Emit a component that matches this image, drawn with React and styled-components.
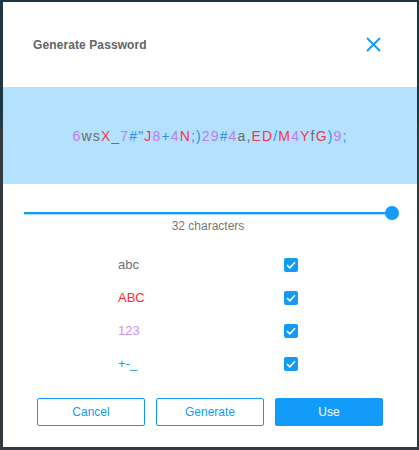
import React, { useState } from "react";
import styled, { createGlobalStyle } from "styled-components";

const GlobalStyle = createGlobalStyle`
  html, body {
    margin: 0;
    padding: 0;
    background: #1f3544;
  }
  body {
    font-family: "Liberation Sans", Arial, sans-serif;
  }
`;

const BLUE = "#139bfa";

const Backdrop = styled.div`
  width: 419px;
  height: 450px;
  padding: 2px 2px 3px 3px;
  box-sizing: border-box;
  background: linear-gradient(180deg, #1d3746 0%, #1d3746 25%, #34393d 30%, #34393d 100%);
`;

const Dialog = styled.div`
  width: 414px;
  height: 445px;
  background: #fff;
  display: flex;
  flex-direction: column;
`;

const Header = styled.div`
  height: 85px;
  flex-shrink: 0;
  display: flex;
  align-items: center;
  justify-content: space-between;
  padding: 0 36px 0 30px;
`;

const Title = styled.div`
  font-size: 12px;
  font-weight: bold;
  color: #636363;
  letter-spacing: 0.1px;
`;

const CloseButton = styled.button`
  border: none;
  background: none;
  padding: 0;
  width: 15px;
  height: 15px;
  cursor: pointer;
  display: flex;
`;

const PasswordBand = styled.div`
  height: 97px;
  flex-shrink: 0;
  background: #b4e1fd;
  display: flex;
  align-items: center;
  justify-content: center;
  font-size: 14px;
  letter-spacing: 1.15px;
`;

const Char = styled.span`
  color: ${(p) => p.color};
`;

const SliderWrap = styled.div`
  margin: 22px 0 0 21px;
  width: 368px;
  height: 14px;
  position: relative;
  display: flex;
  align-items: center;
`;

const Track = styled.div`
  width: 100%;
  height: 2px;
  background: ${BLUE};
  box-shadow: 0 1px 0 #a9d9fb;
`;

const Thumb = styled.div`
  position: absolute;
  right: -7px;
  top: 0;
  width: 14px;
  height: 14px;
  border-radius: 50%;
  background: ${BLUE};
`;

const Caption = styled.div`
  text-align: center;
  font-size: 12px;
  color: #777;
  margin-top: -1px;
  padding-right: 4px;
`;

const Options = styled.div`
  margin-top: 15px;
  display: grid;
  grid-template-columns: 166px 14px;
  grid-auto-rows: 33px;
  padding-left: 115px;
  align-items: center;
`;

const OptionLabel = styled.div`
  font-size: 13px;
  color: ${(p) => p.color};
`;

const Box = styled.div`
  width: 14px;
  height: 14px;
  border-radius: 2px;
  background: ${BLUE};
  display: flex;
  align-items: center;
  justify-content: center;
`;

const Footer = styled.div`
  margin-top: auto;
  margin-bottom: 21px;
  display: flex;
  gap: 11px;
  padding-left: 34px;
`;

const Button = styled.button`
  width: 108px;
  height: 28px;
  box-sizing: border-box;
  border-radius: 2px;
  font-family: "Liberation Sans", Arial, sans-serif;
  font-size: 12px;
  cursor: pointer;
  border: 1.5px solid ${BLUE};
  background: ${(p) => (p.primary ? BLUE : "#fff")};
  color: ${(p) => (p.primary ? "#fff" : BLUE)};
`;

const GRAY = "#6b6b6b";
const RED = "#f2384f";
const PURPLE = "#bb7cf2";
const SYM = "#2f8ff0";

const colorFor = (ch) => {
  if (/[a-z]/.test(ch)) return GRAY;
  if (/[A-Z_]/.test(ch)) return RED;
  if (/[0-9]/.test(ch)) return PURPLE;
  if (ch === ",") return GRAY;
  return SYM;
};

const PASSWORD = '6wsX_7#"J8+4N;)29#4a,ED/M4YfG)9;';

const options = [
  { label: "abc", color: "#6f6f6f" },
  { label: "ABC", color: "#ff2b2b" },
  { label: "123", color: "#c493f5" },
  { label: "+-_", color: "#2f8ff0" },
];

const Check = () => (
  <svg width="10" height="8" viewBox="0 0 10 8">
    <path d="M1 4.2 L3.8 6.8 L9 1.2" fill="none" stroke="#fff" strokeWidth="1.6" />
  </svg>
);

export default function App() {
  const [checked] = useState([true, true, true, true]);
  return (
    <>
      <GlobalStyle />
      <Backdrop>
        <Dialog>
          <Header>
            <Title>Generate Password</Title>
            <CloseButton aria-label="Close">
              <svg width="15" height="15" viewBox="0 0 15 15">
                <path d="M1 1 L14 14 M14 1 L1 14" stroke={BLUE} strokeWidth="1.8" />
              </svg>
            </CloseButton>
          </Header>
          <PasswordBand>
            {PASSWORD.split("").map((ch, i) => (
              <Char key={i} color={colorFor(ch)}>{ch}</Char>
            ))}
          </PasswordBand>
          <SliderWrap>
            <Track />
            <Thumb />
          </SliderWrap>
          <Caption>32 characters</Caption>
          <Options>
            {options.map((o, i) => (
              <React.Fragment key={o.label}>
                <OptionLabel color={o.color}>{o.label}</OptionLabel>
                <Box>{checked[i] && <Check />}</Box>
              </React.Fragment>
            ))}
          </Options>
          <Footer>
            <Button>Cancel</Button>
            <Button>Generate</Button>
            <Button primary>Use</Button>
          </Footer>
        </Dialog>
      </Backdrop>
    </>
  );
}
